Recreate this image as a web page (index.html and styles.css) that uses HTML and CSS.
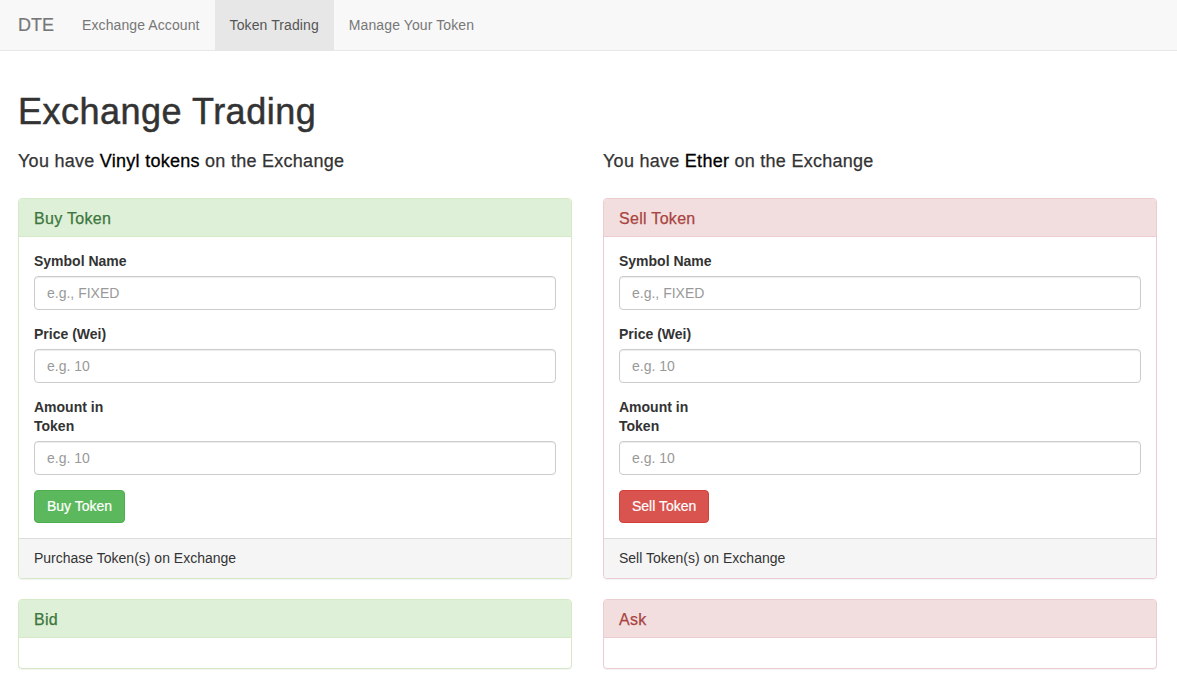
FILE: index.html
```html
<!DOCTYPE html>
<html>
<head>
<meta charset="utf-8">
<title>Exchange Trading</title>
<link rel="stylesheet" href="styles.css">
</head>
<body>
<nav class="navbar">
  <a class="brand" href="#">DTE</a>
  <ul class="nav">
    <li><a href="#">Exchange Account</a></li>
    <li class="active"><a href="#">Token Trading</a></li>
    <li><a href="#">Manage Your Token</a></li>
  </ul>
</nav>
<main class="page">
  <h1 class="title">Exchange Trading</h1>
  <div class="cols">
    <section class="col">
      <h4 class="balance">You have <strong>Vinyl tokens</strong> on the Exchange</h4>
      <div class="panel panel-success">
        <div class="panel-heading">Buy Token</div>
        <div class="panel-body">
          <div class="form-group">
            <label>Symbol Name</label>
            <input class="form-control" type="text" placeholder="e.g., FIXED">
          </div>
          <div class="form-group">
            <label>Price (Wei)</label>
            <input class="form-control" type="text" placeholder="e.g. 10">
          </div>
          <div class="form-group">
            <label>Amount in Token</label>
            <input class="form-control" type="text" placeholder="e.g. 10">
          </div>
          <button class="btn btn-success">Buy Token</button>
        </div>
        <div class="panel-footer">Purchase Token(s) on Exchange</div>
      </div>
      <div class="panel panel-success">
        <div class="panel-heading">Bid</div>
        <div class="panel-body"></div>
      </div>
    </section>
    <section class="col">
      <h4 class="balance">You have <strong>Ether</strong> on the Exchange</h4>
      <div class="panel panel-danger">
        <div class="panel-heading">Sell Token</div>
        <div class="panel-body">
          <div class="form-group">
            <label>Symbol Name</label>
            <input class="form-control" type="text" placeholder="e.g., FIXED">
          </div>
          <div class="form-group">
            <label>Price (Wei)</label>
            <input class="form-control" type="text" placeholder="e.g. 10">
          </div>
          <div class="form-group">
            <label>Amount in Token</label>
            <input class="form-control" type="text" placeholder="e.g. 10">
          </div>
          <button class="btn btn-danger">Sell Token</button>
        </div>
        <div class="panel-footer">Sell Token(s) on Exchange</div>
      </div>
      <div class="panel panel-danger">
        <div class="panel-heading">Ask</div>
        <div class="panel-body"></div>
      </div>
    </section>
  </div>
</main>
</body>
</html>
```
FILE: styles.css
```css
* { box-sizing: border-box; }
html, body { margin: 0; padding: 0; }
body {
  font-family: "Liberation Sans", Arial, Helvetica, sans-serif;
  font-size: 14px;
  line-height: 1.42857;
  color: #333;
  background: #fff;
}
.navbar {
  height: 51px;
  background: #f8f8f8;
  border-bottom: 1px solid #e7e7e7;
  display: flex;
  align-items: stretch;
  padding-left: 3px;
}
.brand {
  display: block;
  padding: 15px 13px 15px 15px;
  font-size: 18px;
  line-height: 20px;
  color: #777;
  text-decoration: none;
  -webkit-text-stroke: 0.2px #777;
}
.nav {
  list-style: none;
  margin: 0;
  padding: 0;
  display: flex;
}
.nav li a {
  display: block;
  padding: 15px;
  line-height: 20px;
  color: #777;
  text-decoration: none;
  letter-spacing: 0.1px;
}
.nav li.active a {
  background: #e7e7e7;
  color: #555;
}
.page {
  padding: 0 20px 0 18px;
}
.title {
  font-size: 36px;
  font-weight: 500;
  line-height: 1.1;
  margin: 41px 0 10px 0;
  color: #333;
  letter-spacing: 0.5px;
  -webkit-text-stroke: 0.5px #333;
}
.cols {
  display: grid;
  grid-template-columns: 1fr 1fr;
  column-gap: 31px;
}
.balance {
  font-size: 18px;
  font-weight: 500;
  line-height: 1.1;
  margin: 10px 0 27px 0;
  letter-spacing: 0.27px;
  -webkit-text-stroke: 0.25px #333;
}
.balance strong {
  font-weight: 500;
  color: #000;
  -webkit-text-stroke: 0.3px #000;
}
.panel {
  border: 1px solid #ddd;
  border-radius: 4px;
  margin-bottom: 20px;
  background: #fff;
  box-shadow: 0 1px 1px rgba(0,0,0,0.05);
}
.panel-heading {
  padding: 11px 15px 0 15px;
  height: 38px;
  font-size: 16px;
  line-height: 1.1;
  border-bottom: 1px solid transparent;
  border-radius: 3px 3px 0 0;
  letter-spacing: 0.3px;
  -webkit-text-stroke: 0.25px currentColor;
}
.panel-body {
  padding: 15px;
  min-height: 30px;
}
.panel-footer {
  padding: 10px 15px 9px 15px;
  background: #f5f5f5;
  border-top: 1px solid #ddd;
  border-radius: 0 0 3px 3px;
}
.panel-success { border-color: #d6e9c6; }
.panel-success .panel-heading {
  background: #dff0d8;
  color: #3c763d;
  border-bottom-color: #d6e9c6;
}
.panel-danger { border-color: #ebccd1; }
.panel-danger .panel-heading {
  background: #f2dede;
  color: #a94442;
  border-bottom-color: #ebccd1;
}
.form-group { margin-bottom: 15px; }
.form-group label {
  display: block;
  max-width: 100px;
  font-weight: 700;
  line-height: 19px;
  margin-bottom: 5px;
}
.form-control {
  display: block;
  width: 100%;
  height: 34px;
  padding: 6px 12px;
  font-family: inherit;
  font-size: 14px;
  color: #555;
  background: #fff;
  border: 1px solid #ccc;
  border-radius: 4px;
  box-shadow: inset 0 1px 1px rgba(0,0,0,0.075);
}
.form-control::placeholder { color: #999; }
.btn {
  display: inline-block;
  padding: 6px 12px;
  font-family: inherit;
  font-size: 14px;
  line-height: 1.42857;
  height: 33px;
  border: 1px solid transparent;
  border-radius: 4px;
  color: #fff;
  cursor: pointer;
  -webkit-text-stroke: 0.2px #fff;
}
.btn-success { background: #5cb85c; border-color: #4cae4c; }
.btn-danger { background: #d9534f; border-color: #d43f3a; }
```
